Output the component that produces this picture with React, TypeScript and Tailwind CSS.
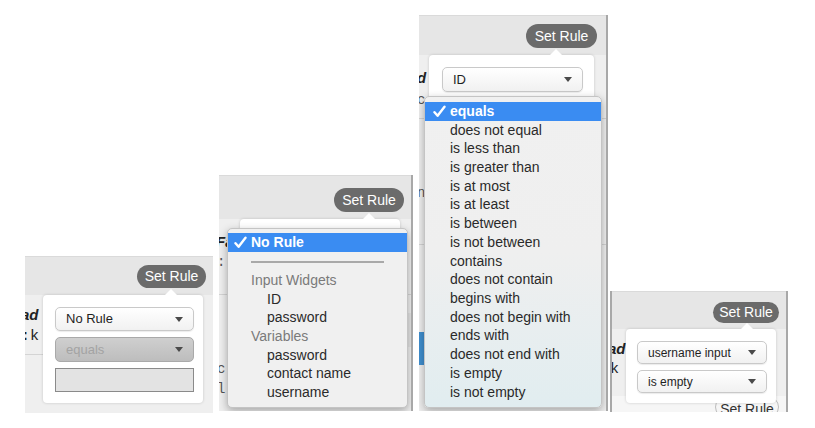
import React from 'react';

const Arrow = () => (
  <svg width="8" height="5" viewBox="0 0 8 5" className="ml-auto mr-[10px] shrink-0">
    <polygon points="0,0 8,0 4,5" fill="#4a4a4a" />
  </svg>
);

const Pill: React.FC<{ className?: string }> = ({ className = '' }) => (
  <div className={`flex items-center justify-center rounded-full bg-[#6b6b6b] text-[14px] text-white ${className}`}>
    Set Rule
  </div>
);

// little notch on the card's top edge, under the pill
const Notch: React.FC<{ className: string }> = ({ className }) => (
  <div className={`absolute top-[-6px] h-0 w-0 border-x-[6px] border-b-[6px] border-x-transparent border-b-white ${className}`} />
);

const Select: React.FC<{ label: string; className?: string; disabled?: boolean; small?: boolean }> = ({ label, className = '', disabled, small }) => (
  <div
    className={`flex items-center rounded-[5px] border pl-[10px] ${small ? 'text-[12px]' : 'text-[13px]'} ${
      disabled
        ? 'border-[#a9a9a9] bg-gradient-to-b from-[#cfcfcf] to-[#bdbdbd] text-[#a3a3a3]'
        : 'border-[#c9c9c9] bg-gradient-to-b from-white to-[#f1f1f1] text-[#1f1f1f] shadow-[0_1px_1px_rgba(0,0,0,0.08)]'
    } ${className}`}
  >
    {label}
    <Arrow />
  </div>
);

const Check = () => (
  <svg width="13" height="13" viewBox="0 0 13 13" className="ml-[6px] mr-[4px] shrink-0">
    <path d="M1.5 7.2 L4.6 10.8 L11.5 1.8" fill="none" stroke="white" strokeWidth="2.4" strokeLinecap="round" strokeLinejoin="round" />
  </svg>
);

const Row: React.FC<{ children: React.ReactNode; indent?: boolean; muted?: boolean }> = ({ children, indent, muted }) => (
  <div className={`flex h-[18.6px] items-center ${indent ? 'pl-[39px]' : 'pl-[23px]'} ${muted ? 'text-[#7a7a7a]' : ''}`}>{children}</div>
);

const ops = [
  'does not equal',
  'is less than',
  'is greater than',
  'is at most',
  'is at least',
  'is between',
  'is not between',
  'contains',
  'does not contain',
  'begins with',
  'does not begin with',
  'ends with',
  'does not end with',
  'is empty',
  'is not empty',
];

const Header: React.FC<{ className: string; pill: string }> = ({ className, pill }) => (
  <div className={`flex shrink-0 items-start justify-end border-t border-[#dadada] bg-[#e6e6e6] ${className}`}>
    <Pill className={pill} />
  </div>
);

export default function App() {
  return (
    <div className="flex h-[428px] w-[815px] items-start overflow-hidden bg-white font-['Liberation_Sans',Arial,sans-serif] text-[#222]">
      {/* panel 1 */}
      <div className="relative ml-[25px] mt-[256px] flex h-[157px] w-[188px] shrink-0 flex-col overflow-hidden bg-[#efefef]">
        <Header className="h-[39px] pr-[7px] pt-[8px]" pill="h-[23px] w-[69px]" />
        <div className="flex flex-col pt-[9px] text-[15px] leading-[22px]">
          <div className="-ml-[4px] font-bold italic">ad</div>
          <div className="-ml-[4px] font-['Liberation_Mono',monospace]">:k</div>
          <div className="mt-[6px] h-px w-[18px] bg-[#d4d4d4]" />
        </div>
        <div className="absolute left-[18px] top-[39px] flex h-[108px] w-[160px] flex-col gap-[6px] rounded-[4px] bg-white px-[12px] pt-[12px] shadow-[0_0_3px_rgba(0,0,0,0.18)]">
          <Notch className="left-[122px]" />
          <Select label="No Rule" className="h-[24px] w-[139px]" />
          <Select label="equals" disabled className="h-[25px] w-[139px]" />
          <div className="h-[24px] w-[139px] border border-[#8a8a8a] bg-[#e3e3e3]" />
        </div>
      </div>

      {/* panel 2 */}
      <div className="relative ml-[6px] mt-[175px] flex h-[236px] w-[194px] shrink-0 flex-col overflow-hidden border-r-2 border-[#a8a8a8] bg-[#efefef]">
        <Header className="h-[44px] pr-[7px] pt-[12px]" pill="h-[24px] w-[70px]" />
        <div className="flex flex-col pt-[13px] text-[15px] leading-[20px]">
          <div className="-ml-[3px] font-bold italic">Fa</div>
          <div className="-ml-[2px] font-['Liberation_Mono',monospace] text-[14px] text-[#555]">:</div>
          <div className="mt-[22px] h-px w-full bg-[#d4d4d4]" />
          <div className="mt-[18px] h-[34px] w-[8px] self-end bg-[#e4e4e4]" />
          <div className="-ml-[2px] mt-[12px] font-['Liberation_Mono',monospace] text-[14px] text-[#555]">c</div>
          <div className="-ml-[2px] font-['Liberation_Mono',monospace] text-[14px] text-[#555]">l</div>
        </div>
        <div className="absolute left-[21px] top-[44px] h-[40px] w-[160px] rounded-[4px] bg-white shadow-[0_0_3px_rgba(0,0,0,0.18)]">
          <Notch className="left-[123px]" />
        </div>
        <div className="absolute left-[8px] top-[53px] flex w-[181px] flex-col rounded-[5px] border border-[#c4c4c4] bg-[#f0f0f0] pb-[5px] pt-[4px] text-[14px] text-[#2a2a2a] shadow-[0_3px_8px_rgba(0,0,0,0.3)]">
          <div className="flex h-[18.5px] items-center bg-[#3a8cf2] font-bold text-white">
            <Check />
            No Rule
          </div>
          <div className="flex h-[20px] items-center pl-[23px]">
            <div className="h-[2px] w-[133px] bg-[#a9a9a9]" />
          </div>
          <Row muted>Input Widgets</Row>
          <Row indent>ID</Row>
          <Row indent>password</Row>
          <Row muted>Variables</Row>
          <Row indent>password</Row>
          <Row indent>contact name</Row>
          <Row indent>username</Row>
        </div>
      </div>

      {/* panel 3 */}
      <div className="relative ml-[6px] mt-[15px] flex h-[396px] w-[189px] shrink-0 flex-col overflow-hidden border-r-2 border-[#a8a8a8] bg-[#efefef]">
        <Header className="h-[40px] pr-[9px] pt-[8px]" pill="h-[24px] w-[71px]" />
        <div className="flex flex-col pt-[12px] text-[15px] leading-[22px]">
          <div className="-ml-[2px] font-bold italic">d</div>
          <div className="-ml-[2px] font-['Liberation_Mono',monospace] text-[14px] text-[#555]">c</div>
          <div className="mt-[7px] h-px w-full bg-[#d4d4d4]" />
          <div className="-ml-[2px] mt-[63px] font-['Liberation_Mono',monospace] text-[14px] text-[#555]">n</div>
          <div className="mt-[40px] h-px w-full bg-[#d4d4d4]" />
          <div className="mt-[87px] h-[33px] w-[8px] bg-[#3f8fcf]" />
        </div>
        <div className="absolute left-[10px] top-[40px] flex h-[80px] w-[165px] flex-col rounded-[4px] bg-white px-[13px] pt-[12px] shadow-[0_0_3px_rgba(0,0,0,0.18)]">
          <Notch className="left-[121px]" />
          <Select label="ID" className="h-[25px] w-[141px]" />
        </div>
        <div className="absolute left-[5px] top-[81px] flex w-[178px] flex-col rounded-[5px] border border-[#c4c4c4] bg-gradient-to-b from-[#f0f0f0] via-[#efefef] to-[#e1edf0] pb-[6px] pt-[5px] text-[14px] text-[#2a2a2a] shadow-[0_3px_8px_rgba(0,0,0,0.3)]">
          <div className="flex h-[18.7px] items-center bg-[#3a8cf2] pl-[2px] font-bold text-white">
            <Check />
            equals
          </div>
          {ops.map(o => (
            <div key={o} className="flex h-[18.73px] items-center pl-[25px]">
              {o}
            </div>
          ))}
        </div>
      </div>

      {/* panel 4 */}
      <div className="relative ml-[2px] mt-[291px] flex h-[121px] w-[178px] shrink-0 flex-col overflow-hidden border-x-2 border-[#a8a8a8] bg-[#efefef]">
        <Header className="h-[38px] pr-[7px] pt-[10px]" pill="h-[21px] w-[66px]" />
        <div className="flex grow flex-col pt-[9px] text-[15px] leading-[21px]">
          <div className="-ml-[4px] font-bold italic">ad</div>
          <div className="-ml-[2px] font-['Liberation_Mono',monospace]">k</div>
          <div className="mt-auto flex h-[16px] justify-end bg-[#f6f6f6] pr-[7px]">
            <div className="flex h-[22px] w-[64px] justify-center rounded-full border border-[#bdbdbd] pt-[2px] text-[14px] text-[#333]">Set Rule</div>
          </div>
        </div>
        <div className="absolute left-[14px] top-[38px] flex h-[74px] w-[150px] flex-col gap-[6px] rounded-[4px] bg-white px-[11px] pt-[12px] shadow-[0_0_3px_rgba(0,0,0,0.18)]">
          <Notch className="left-[115px]" />
          <Select label="username input" small className="h-[23px] w-[130px]" />
          <Select label="is empty" small className="h-[23px] w-[130px]" />
        </div>
      </div>
    </div>
  );
}
